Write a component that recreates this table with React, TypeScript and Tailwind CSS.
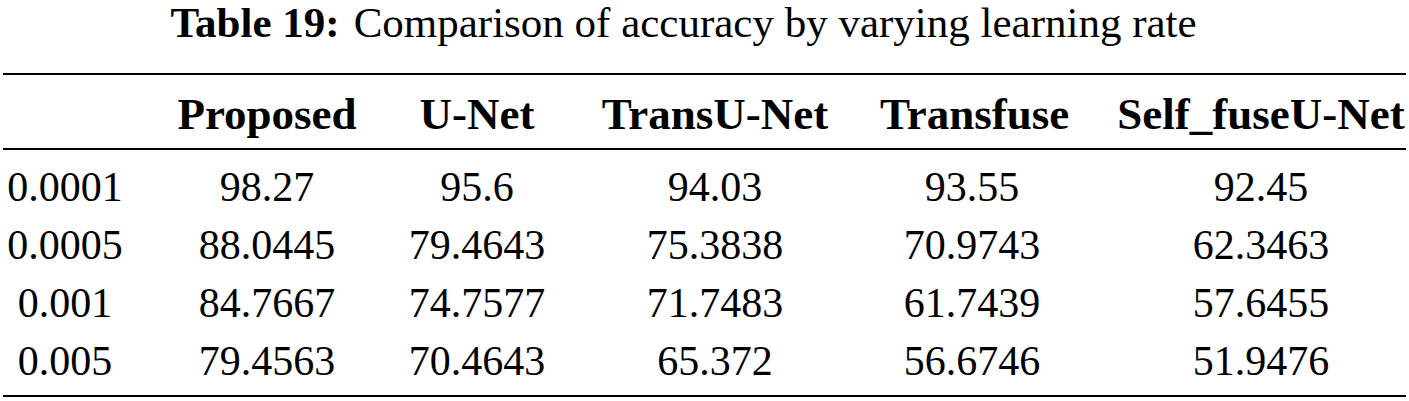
import React from "react";

const headers = ["", "Proposed", "U-Net", "TransU-Net", "Transfuse", "Self_fuseU-Net"];

const rows = [
  ["0.0001", "98.27", "95.6", "94.03", "93.55", "92.45"],
  ["0.0005", "88.0445", "79.4643", "75.3838", "70.9743", "62.3463"],
  ["0.001", "84.7667", "74.7577", "71.7483", "61.7439", "57.6455"],
  ["0.005", "79.4563", "70.4643", "65.372", "56.6746", "51.9476"],
];

// column 4 carries extra right padding so its text sits where the original put it
const cellPad = ["", "", "", "", "pr-[49px]", ""];

export default function App() {
  return (
    <div className="w-[1409px] h-[401px] bg-white text-black font-['Liberation_Serif',serif] overflow-hidden">
      <div className="h-[73px] text-center text-[43px] leading-[46px] pr-[42px]">
        <span className="font-bold">Table 19:</span>
        <span className="ml-[14px]">Comparison of accuracy by varying learning rate</span>
      </div>
      <div className="mx-[3px] border-t-2 border-black" />
      <div className="grid grid-cols-[130px_274px_146px_330px_233px_296px] h-[73px] items-center text-[45px] font-bold leading-none pt-[6px]">
        {headers.map((h, i) => (
          <div key={i} className={"text-center whitespace-nowrap " + cellPad[i]}>
            {h}
          </div>
        ))}
      </div>
      <div className="mx-[3px] border-t-2 border-black" />
      <div className="pt-[8px] pb-[5px]">
        {rows.map((r, ri) => (
          <div key={ri} className="grid grid-cols-[130px_274px_146px_330px_233px_296px] h-[58px] items-center text-[42px] leading-none">
            {r.map((c, ci) => (
              <div key={ci} className={"text-center whitespace-nowrap " + cellPad[ci]}>
                {c}
              </div>
            ))}
          </div>
        ))}
      </div>
      <div className="mx-[3px] border-t-2 border-black" />
    </div>
  );
}
